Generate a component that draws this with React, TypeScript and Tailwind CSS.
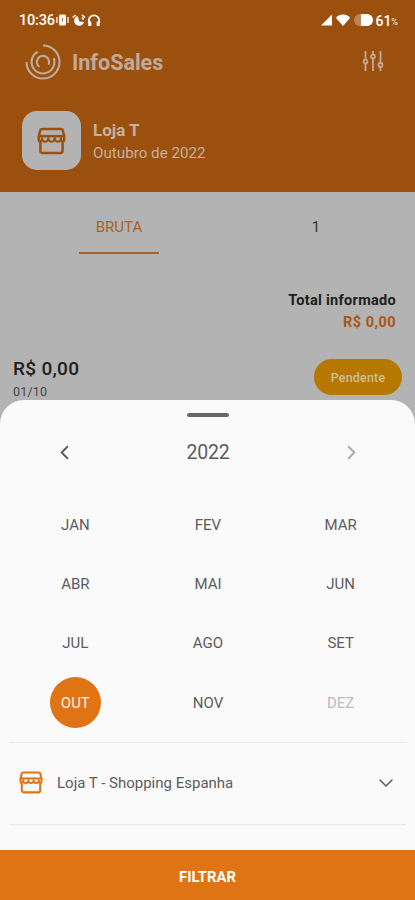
import React from "react";
import clsx from "clsx";
import { ChevronDown, ChevronLeft, ChevronRight } from "lucide-react";

const MONTHS = ["JAN", "FEV", "MAR", "ABR", "MAI", "JUN", "JUL", "AGO", "SET", "OUT", "NOV", "DEZ"];

function StoreIcon({ className }: { className?: string }) {
  return (
    <svg viewBox="0 0 30 28" fill="none" stroke="currentColor" strokeWidth="2.6" strokeLinejoin="round" className={className}>
      <path d="M5.500 1.500h19q1.900 0 2.200 1.700l1.500 6.300v3q0 2-1.700 2.500v9q0 2.300-2.300 2.300H5.800q-2.300 0-2.300-2.300v-9q-1.700-.5-1.700-2.500v-3L3.300 3.200q.3-1.700 2.200-1.700Z" />
      <path d="M2 9h26" />
      <path d="M3.500 14.500Q5 14 5.200 11a3.270 3.800 0 0 0 6.540 0 3.270 3.800 0 0 0 6.540 0 3.270 3.800 0 0 0 6.540 0Q25 14 26.500 14.500" strokeWidth="2.200" />
    </svg>
  );
}

function Logo() {
  return (
    <svg viewBox="-18 -18 36 36" fill="none" stroke="currentColor" strokeWidth="2.1" className="size-9">
      <path d="M0-16.500A16.500 16.500 0 1 1-16.500 0" />
      <path d="M-5-10.400A11.500 11.500 0 1 0 10.800-4" />
      <path d="M-3.500 5A6.100 6.100 0 1 1 5.400 2.800" />
    </svg>
  );
}

function StatusBar() {
  return (
    <div className="flex h-10 items-center justify-between pl-[19px] pr-[17px] text-white">
      <div className="flex items-center">
        <span className="w-[37px] pt-[1px] text-[14.5px] font-medium tracking-[-0.2px]">10:36</span>
        <svg viewBox="0 0 13 12" className="h-3 w-[13px]" fill="currentColor">
          <rect x="3" y="0.500" width="7" height="11" rx="1.500" />
          <path d="M1 3v6M12 3v6" stroke="currentColor" strokeWidth="1.300" />
          <path d="M6.500 4v3.500" stroke="#9b500d" strokeWidth="0.800" />
        </svg>
        <svg viewBox="0 0 14 13" className="ml-[3px] h-[13px] w-[14px]" fill="currentColor">
          <path d="M5.500 2A5 5 0 1 0 12 8L7.500 7.500Z" />
          <path d="M.8 3.500 3.500 1M10 1l3 2.500M10 3.500l1.500 2" stroke="currentColor" strokeWidth="1.600" />
        </svg>
        <svg viewBox="0 0 14 13" className="ml-[1px] h-[13px] w-[14px]" fill="none" stroke="currentColor">
          <path d="M1.800 9V6.500a5.200 5.200 0 0 1 10.400 0V9" strokeWidth="1.800" />
          <path d="M2.800 7.500V12M11.200 7.500V12" strokeWidth="3" />
        </svg>
      </div>
      <div className="flex items-center">
        <svg viewBox="0 0 12 12" className="size-3" fill="currentColor">
          <path d="M11 .5v11H0Z" />
        </svg>
        <svg viewBox="0 0 14 12" className="ml-[3px] h-3 w-[14px]" fill="currentColor">
          <path d="M0 4Q2 .5 7 .5T14 4L7 12Z" />
        </svg>
        <div className="ml-[4px] flex h-[12px] w-[19px] overflow-hidden rounded-full bg-[#bd8455]">
          <div className="ml-[7px] flex-1 bg-white" />
        </div>
        <span className="ml-[2px] pt-[1px] text-[14px] font-medium leading-none">61</span>
        <span className="mt-[4px] text-[9px] font-medium leading-none opacity-80">%</span>
      </div>
    </div>
  );
}

function Header() {
  return (
    <header className="h-48 bg-[#9b500d]">
      <StatusBar />
      <div className="flex h-[44px] items-center pl-[25px] pr-[31px] text-[#c0aa99]">
        <Logo />
        <h1 className="ml-[11px] flex-1 pt-[2px] text-[21.500px] font-bold">InfoSales</h1>
        <svg viewBox="0 0 22 20" fill="none" stroke="currentColor" strokeWidth="1.800" className="-mt-[2px] h-5 w-[22px]">
          <path d="M3.500 0v8.500M3.500 12.500V20M11 0v3.500M11 7.500V20M18.500 0v12M18.500 16V20" />
          <circle cx="3.500" cy="10.500" r="2" />
          <circle cx="11" cy="5.500" r="2" />
          <circle cx="18.500" cy="14" r="2" />
        </svg>
      </div>
      <div className="mt-[27px] flex items-center pl-[22px]">
        <div className="flex size-[59px] items-center justify-center rounded-[15px] bg-[#b3b3b3] text-[#9b500d]">
          <StoreIcon className="h-[28px] w-[29px]" />
        </div>
        <div className="ml-[12px] pt-[2px] text-[#c4b1a2]">
          <p className="text-[17px] font-bold leading-[23px]">Loja T</p>
          <p className="text-[15.200px] leading-[23px]">Outubro de 2022</p>
        </div>
      </div>
    </header>
  );
}

function Summary() {
  return (
    <section className="h-[238px] bg-[#b3b3b3]">
      <div className="flex h-[62px] justify-between pl-[79px] pr-[59px] pt-[24px] text-[15px]">
        <div className="h-[38px] w-20 border-b-2 border-[#a8622c] text-center leading-[22px] text-[#a8622c]">BRUTA</div>
        <div className="w-20 text-center leading-[22px] text-[#333]">1</div>
      </div>
      <div className="mt-[36px] pr-[19px] text-right">
        <p className="text-[14.500px] font-bold leading-[22px] tracking-[0.3px] text-[#202020]">Total informado</p>
        <p className="text-[14.500px] font-bold leading-[22px] tracking-[0.45px] text-[#a85617]">R$ 0,00</p>
      </div>
      <div className="mt-[25px] flex justify-between pl-[13px] pr-[13px]">
        <div className="pt-[2px]">
          <p className="text-[19px] font-medium leading-[16px] tracking-[0.3px] text-[#202020]">R$ 0,00</p>
          <p className="mt-[7px] text-[12.500px] leading-[16px] tracking-[0.2px] text-[#444]">01/10</p>
        </div>
        <div className="flex h-9 w-[88px] items-center justify-center rounded-full bg-[#b67800] pt-[2px] text-[12.500px] font-medium tracking-[0.2px] text-[#cfbd98]">
          Pendente
        </div>
      </div>
    </section>
  );
}

function FilterSheet() {
  return (
    <section className="relative -mt-[30px] flex h-[500px] flex-col rounded-t-[24px] bg-[#fafafa] text-[#5c5c5c]">
      <div className="mx-auto mt-[13px] h-[4px] w-[42px] rounded-full bg-[#686868]" />
      <div className="mt-[19px] flex h-8 items-center justify-between pl-[53px] pr-[52px]">
        <ChevronLeft className="size-[23px]" strokeWidth={2} />
        <span className="pt-[2px] text-[19.500px] leading-none tracking-[-0.2px]">2022</span>
        <ChevronRight className="size-[23px] text-[#aaa]" strokeWidth={2} />
      </div>
      <div className="mt-[27px] grid auto-rows-[59.300px] grid-cols-3 pl-[9px] pr-[8px] text-[15px]">
        {MONTHS.map((month) => (
          <div key={month} className="flex items-center justify-center">
            <div
              className={clsx(
                "flex size-[51px] items-center justify-center rounded-full pt-[1px]",
                month === "OUT" && "bg-[#e07414] text-[#fff1e5]",
                month === "DEZ" && "text-[#bbb]"
              )}
            >
              {month}
            </div>
          </div>
        ))}
      </div>
      <div className="mx-[9px] mt-[10px] flex h-[83px] items-center border-y border-[#e9e9e9] pl-[10px] pr-[8px]">
        <StoreIcon className="-mt-[3px] h-[23px] w-[24px] text-[#e07414]" />
        <span className="ml-[14px] flex-1 text-[15px]">Loja T - Shopping Espanha</span>
        <ChevronDown className="-mt-[2px] size-6" strokeWidth={1.5} />
      </div>
      <button className="mt-auto h-[50px] bg-[#e07414] pt-[4px] text-[14.800px] font-bold text-white">FILTRAR</button>
    </section>
  );
}

export default function App() {
  return (
    <main className="h-[900px] w-full overflow-hidden font-[Roboto,sans-serif]">
      <Header />
      <Summary />
      <FilterSheet />
    </main>
  );
}
